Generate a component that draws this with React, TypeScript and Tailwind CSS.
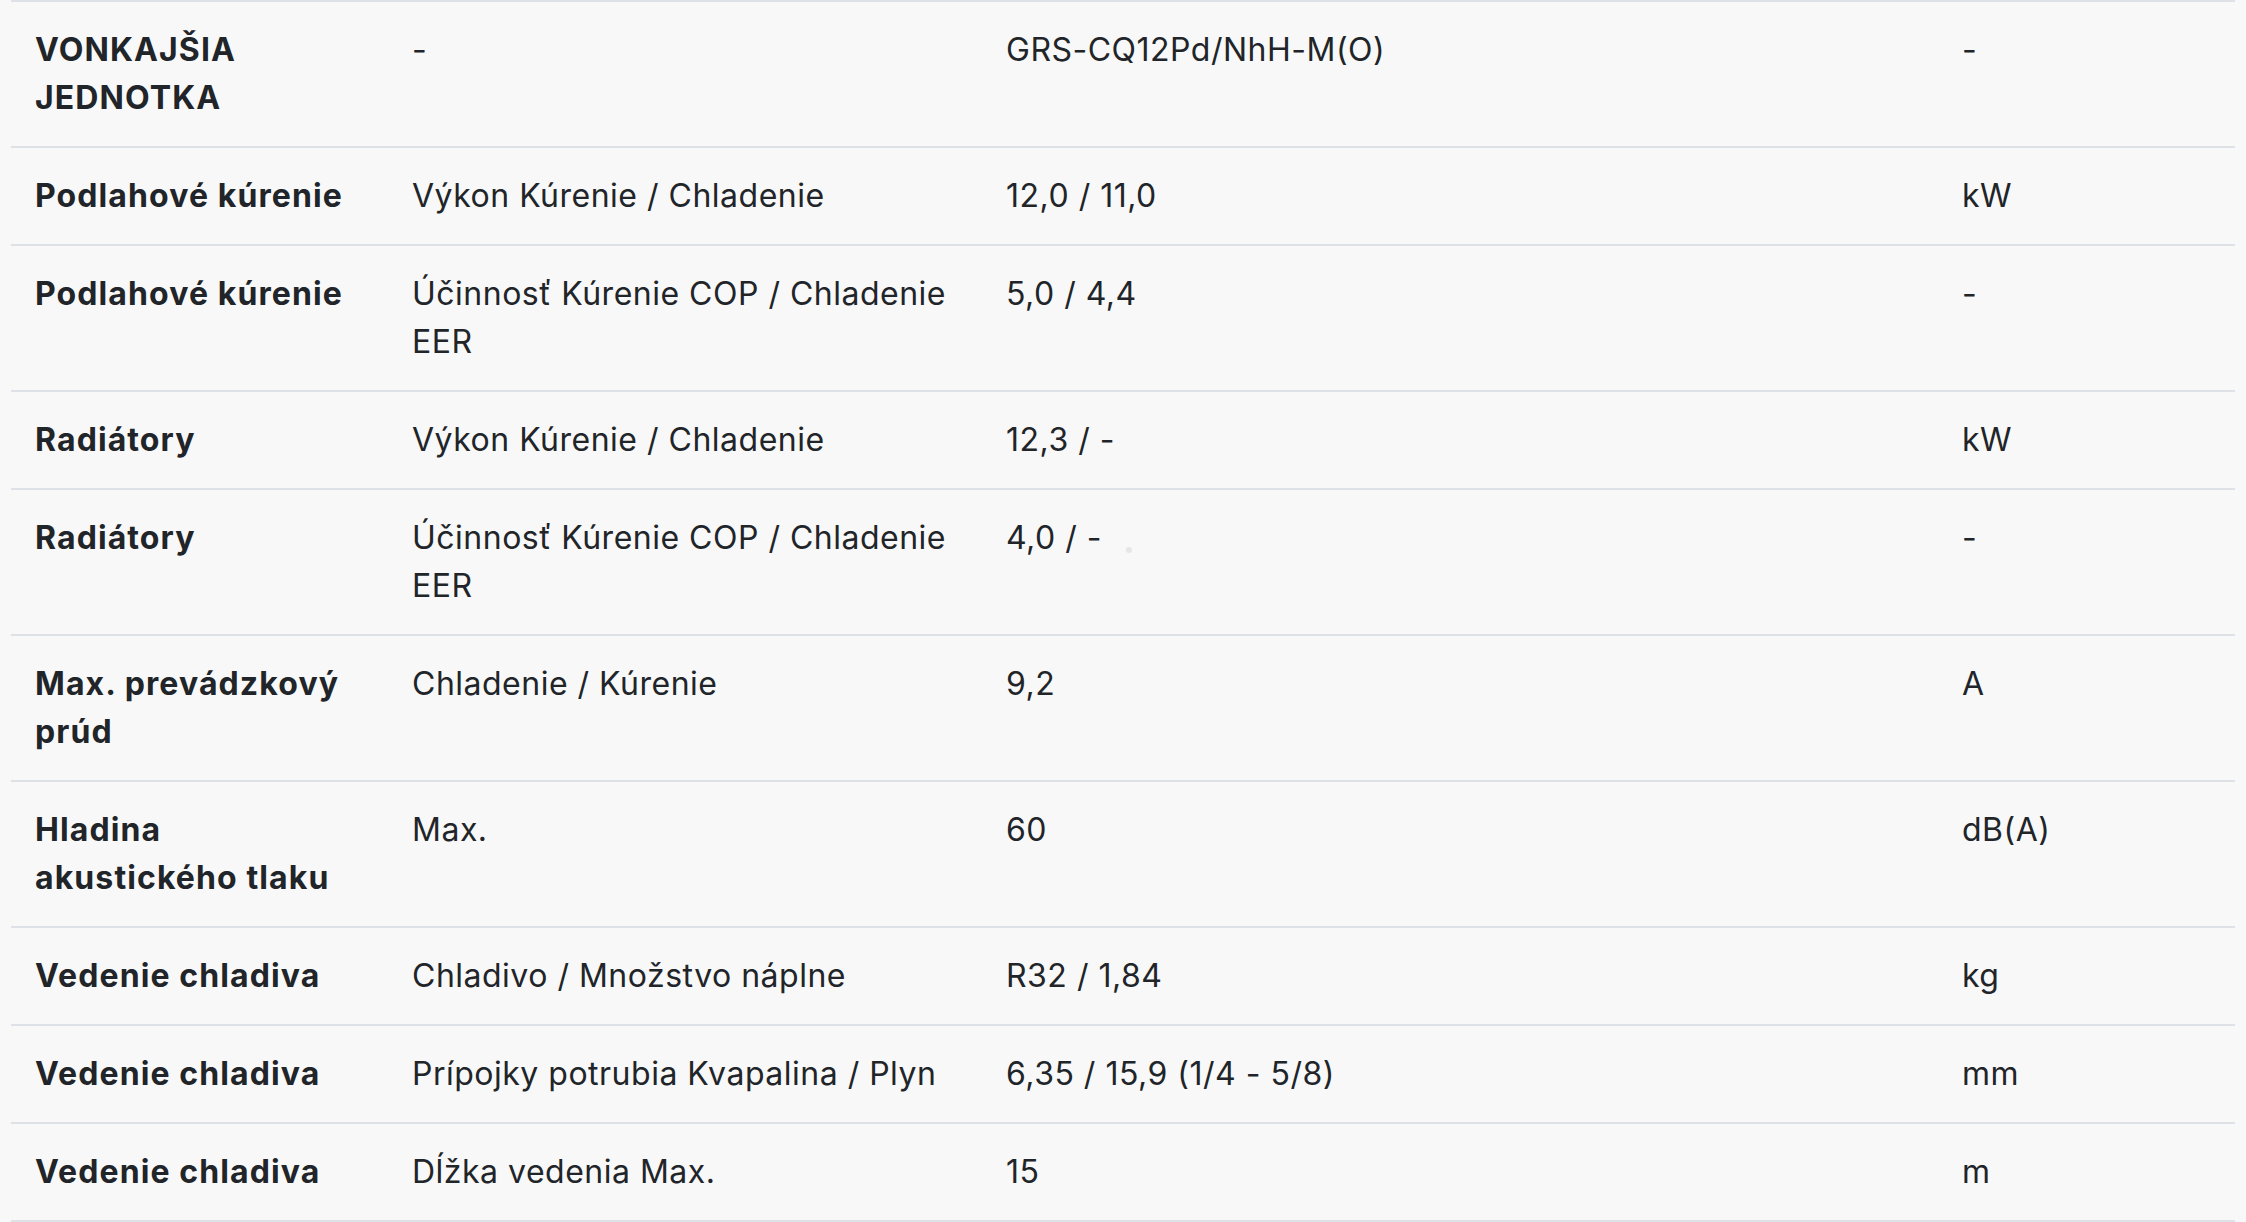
const rows: [string, string, string, string][] = [
  ["VONKAJŠIA JEDNOTKA", "-", "GRS-CQ12Pd/NhH-M(O)", "-"],
  ["Podlahové kúrenie", "Výkon Kúrenie / Chladenie", "12,0 / 11,0", "kW"],
  ["Podlahové kúrenie", "Účinnosť Kúrenie COP / Chladenie EER", "5,0 / 4,4", "-"],
  ["Radiátory", "Výkon Kúrenie / Chladenie", "12,3 / -", "kW"],
  ["Radiátory", "Účinnosť Kúrenie COP / Chladenie EER", "4,0 / -", "-"],
  ["Max. prevádzkový prúd", "Chladenie / Kúrenie", "9,2", "A"],
  ["Hladina akustického tlaku", "Max.", "60", "dB(A)"],
  ["Vedenie chladiva", "Chladivo / Množstvo náplne", "R32 / 1,84", "kg"],
  ["Vedenie chladiva", "Prípojky potrubia Kvapalina / Plyn", "6,35 / 15,9 (1/4 - 5/8)", "mm"],
  ["Vedenie chladiva", "Dĺžka vedenia Max.", "15", "m"],
];

export default function App() {
  return (
    <div className="relative min-h-screen bg-[#f8f8f8] px-[11px] text-[32px] leading-[48px] tracking-[0.5px] text-[#212529] font-['Inter','Noto_Sans',sans-serif]">
      <div className="border-t-2 border-[#dee2e6]">
        {rows.map((r, i) => (
          <div key={i} className="grid grid-cols-[377px_594px_956px_294px] border-b-2 border-[#dee2e6]">
            <div className="p-6 font-bold tracking-[1.1px]">{r[0]}</div>
            <div className="p-6">{r[1]}</div>
            <div className="p-6">{r[2]}</div>
            <div className="p-6">{r[3]}</div>
          </div>
        ))}
      </div>
      <span className="absolute left-[1126px] top-[547px] h-[6px] w-[6px] rounded-full bg-[#e6e6e6]" />
    </div>
  );
}
